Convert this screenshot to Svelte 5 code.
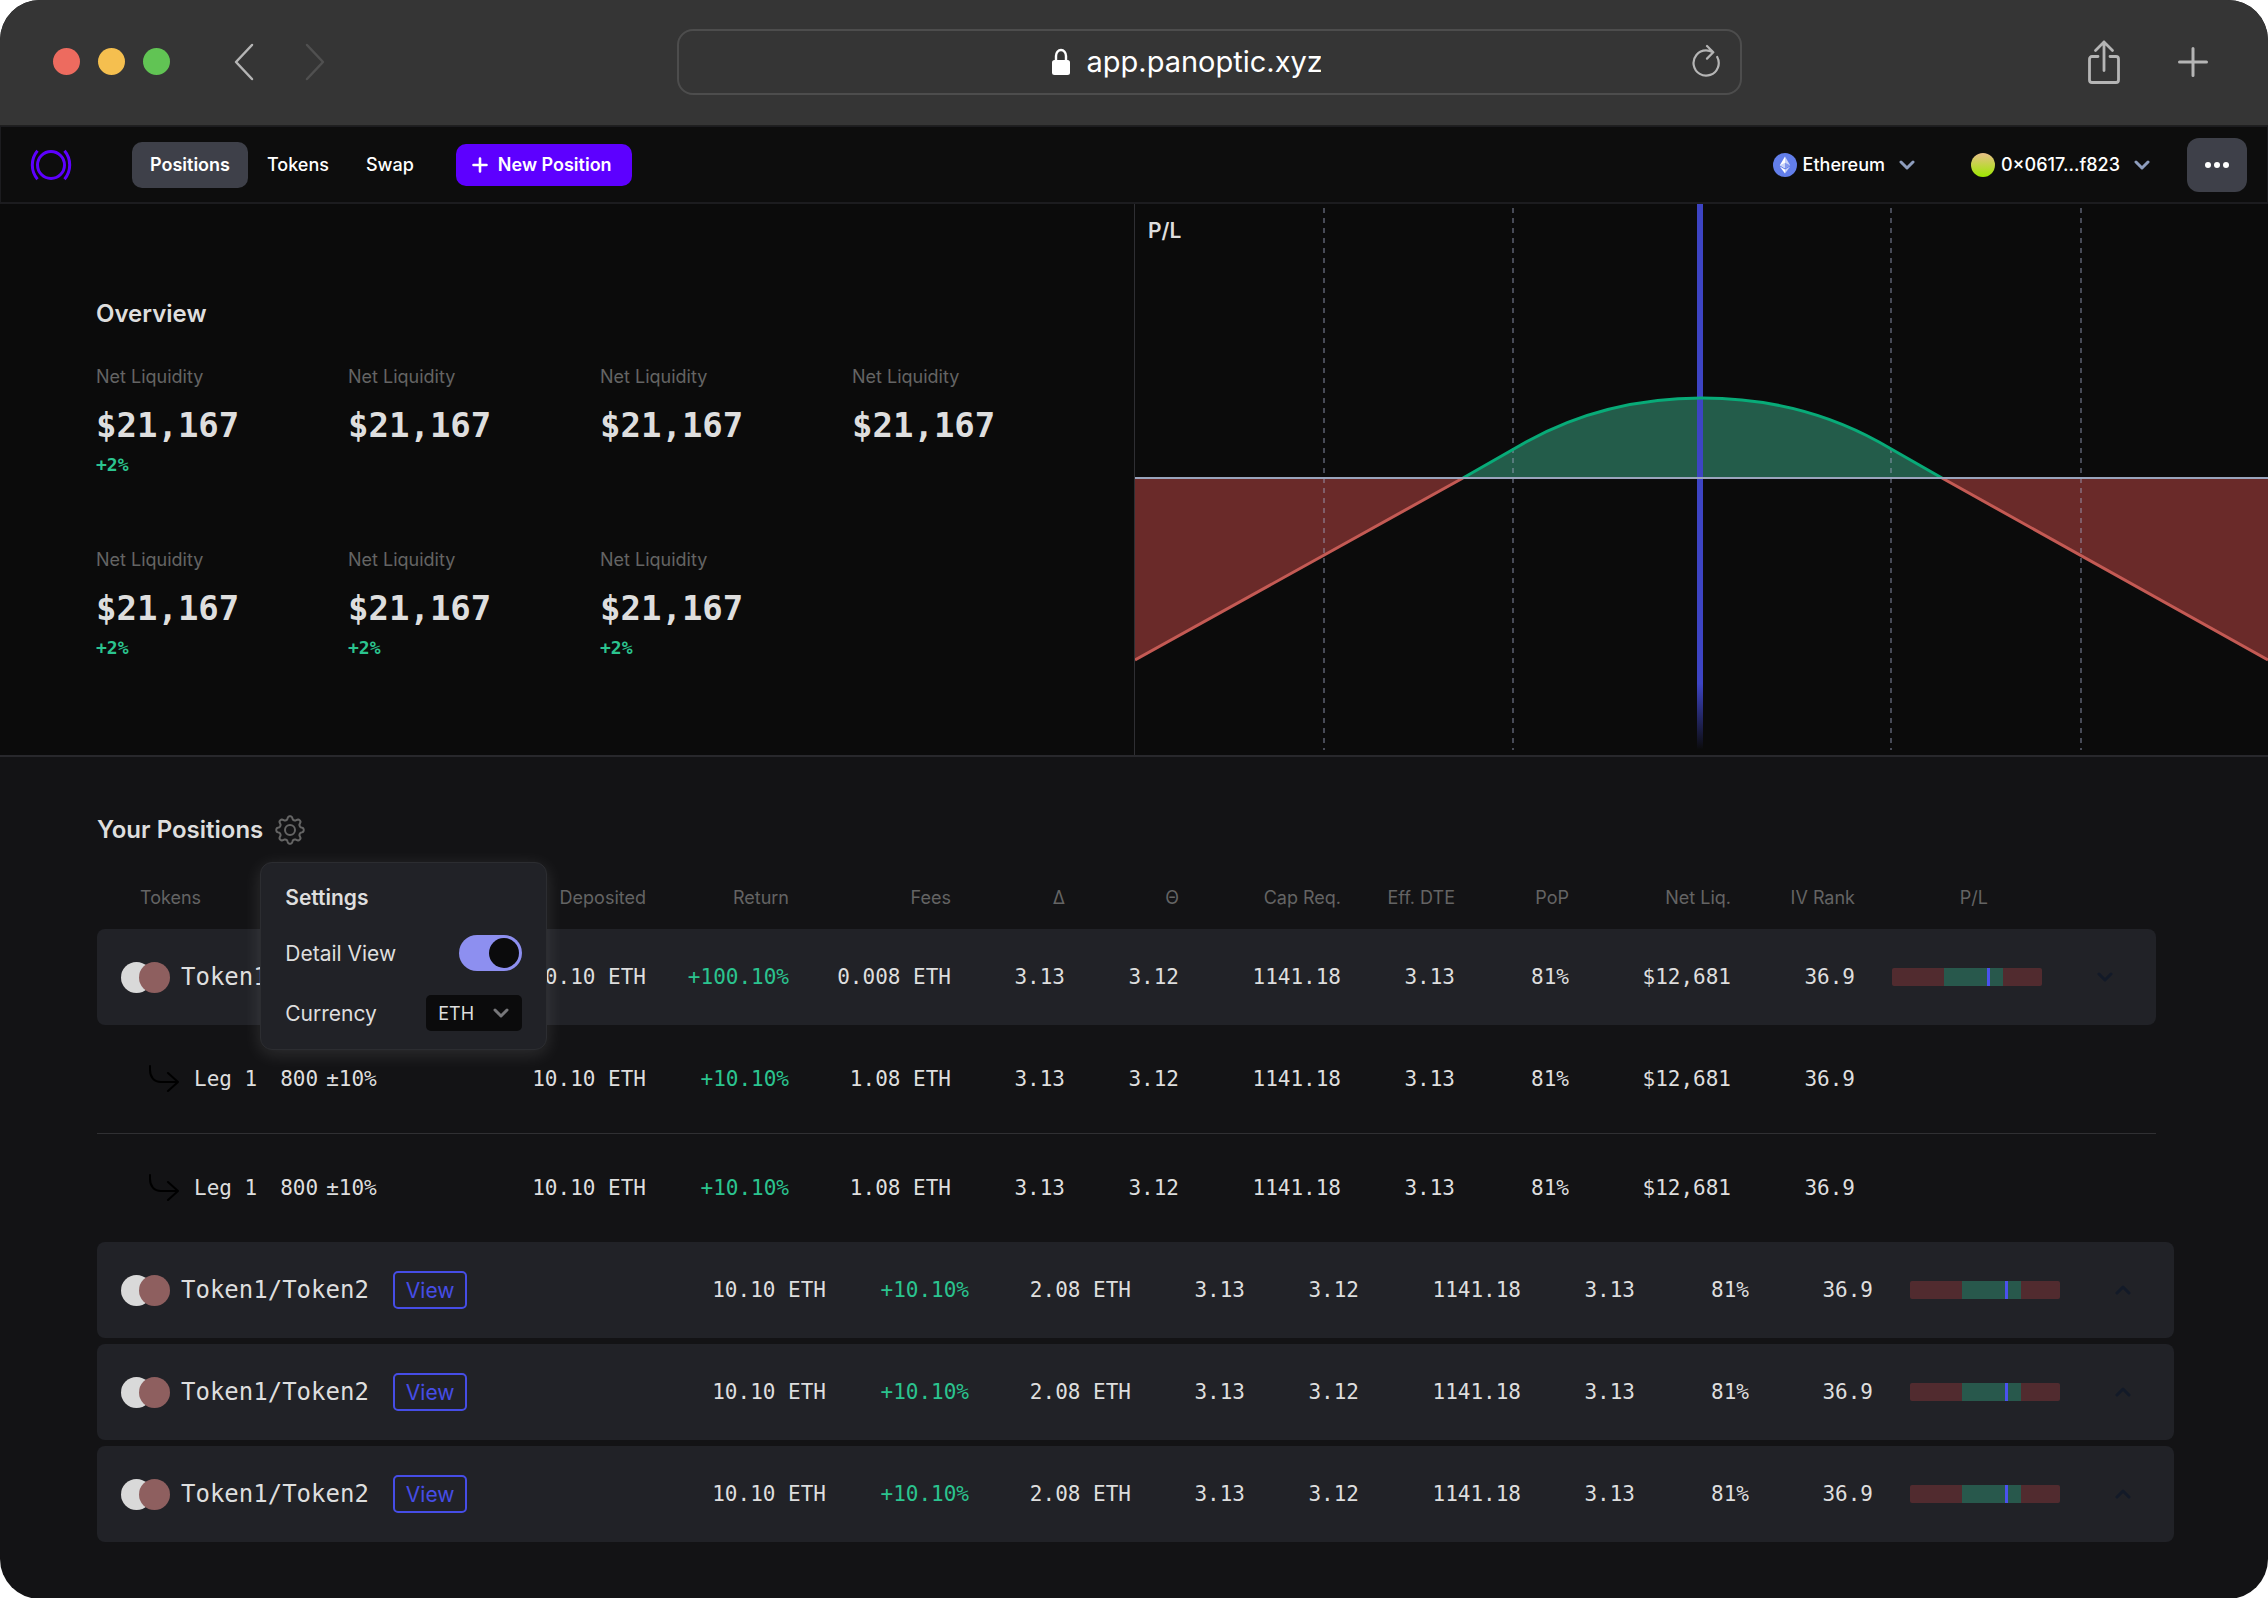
<script lang="ts">
  type Stat = { label: string; value: string; change?: string };
  type Row = { kind: 'pair' | 'leg'; cells: string[]; open?: boolean };

  const stats: Stat[] = [
    { label: 'Net Liquidity', value: '$21,167', change: '+2%' },
    { label: 'Net Liquidity', value: '$21,167' },
    { label: 'Net Liquidity', value: '$21,167' },
    { label: 'Net Liquidity', value: '$21,167' },
    { label: 'Net Liquidity', value: '$21,167', change: '+2%' },
    { label: 'Net Liquidity', value: '$21,167', change: '+2%' },
    { label: 'Net Liquidity', value: '$21,167', change: '+2%' },
  ];

  const headers = ['Deposited', 'Return', 'Fees', 'Δ', 'Θ', 'Cap Req.', 'Eff. DTE', 'PoP', 'Net Liq.', 'IV Rank'];
  const openCols = ['mid', 'mid', 'wide', 'slim', 'slim', 'wide', 'slim', 'slim', 'wide', 'rank'];
  const closedCols = openCols.filter((_, i) => i !== 8);

  const legCells = ['10.10 ETH', '+10.10%', '1.08 ETH', '3.13', '3.12', '1141.18', '3.13', '81%', '$12,681', '36.9'];
  const openRows: Row[] = [
    {
      kind: 'pair',
      open: true,
      cells: ['10.10 ETH', '+100.10%', '0.008 ETH', '3.13', '3.12', '1141.18', '3.13', '81%', '$12,681', '36.9'],
    },
    { kind: 'leg', cells: legCells },
    { kind: 'leg', cells: legCells },
  ];

  const closedCells = ['10.10 ETH', '+10.10%', '2.08 ETH', '3.13', '3.12', '1141.18', '3.13', '81%', '36.9'];
  const closedRows: Row[] = [1, 2, 3].map(() => ({ kind: 'pair', cells: closedCells }));

  // eight rounded teeth around the centre of a 30x30 box
  const gearPoints = Array.from({ length: 96 }, (_, i) => {
    const angle = (i / 96) * 2 * Math.PI;
    const radius = 12.1 + 1.7 * Math.tanh(1.8 * Math.cos(8 * angle));
    return `${(15 + radius * Math.sin(angle)).toFixed(2)},${(15 - radius * Math.cos(angle)).toFixed(2)}`;
  }).join(' ');

  let showSettings = $state(true);
  let detailView = $state(true);
  let currency = $state('ETH');
  let url = $state('app.panoptic.xyz');
</script>

{#snippet chevron(cls: string)}
  <svg class="chevron {cls}" width="16" height="10" viewBox="0 0 16 10" aria-hidden="true">
    <path d="M2 2l6 6 6-6" fill="none" stroke="currentColor" stroke-width="3" stroke-linecap="round" stroke-linejoin="round" />
  </svg>
{/snippet}

{#snippet columns(cols: string[])}
  <colgroup>
    <col />
    {#each cols as col}
      <col class={col} />
    {/each}
    <col class="bar" />
    <col class="toggle" />
  </colgroup>
{/snippet}

{#snippet positionRow(row: Row)}
  <tr class={row.kind}>
    <td>
      {#if row.kind === 'pair'}
        <div class="name">
          <span class="coins"><i></i><i></i></span>
          <span class="pairname">Token1/Token2</span>
          <button type="button" class="view">View</button>
        </div>
      {:else}
        <div class="legname">
          <svg width="30" height="28" viewBox="0 0 30 28" aria-hidden="true">
            <path d="M1 1v4c0 7 4 12 11 12h17M19 8l10 9-10 9" fill="none" stroke="#000" stroke-width="2" stroke-linecap="round" stroke-linejoin="round" />
          </svg>
          <span>Leg 1</span>
          <span class="strike"><span>800</span><span>±10%</span></span>
        </div>
      {/if}
    </td>
    {#each row.cells as cell}
      <td class:gain={cell.startsWith('+')}>{cell}</td>
    {/each}
    <td class="plcell">
      {#if row.kind === 'pair'}
        <svg class="plbar" width="150" height="18" viewBox="0 0 150 18" aria-hidden="true">
          <rect width="150" height="18" rx="2" fill="#512b2f" />
          <rect x="52" width="59" height="18" fill="#28584c" />
          <rect x="95" width="3" height="18" fill="#4a51ee" />
        </svg>
      {/if}
    </td>
    <td class="expand">
      {#if row.kind === 'pair'}
        <button type="button" aria-label={row.open ? 'Collapse' : 'Expand'}>
          {@render chevron(row.open ? '' : 'up')}
        </button>
      {/if}
    </td>
  </tr>
{/snippet}

<div class="window">
  <header class="chrome">
    <div class="lights"><i class="red"></i><i class="yellow"></i><i class="green"></i></div>
    <div class="history">
      <button type="button" aria-label="Back">
        <svg width="20" height="38" viewBox="0 0 20 38"><path d="M18 2L2 19l16 17" fill="none" stroke="#b5b5b5" stroke-width="2.5" stroke-linecap="round" stroke-linejoin="round" /></svg>
      </button>
      <button type="button" aria-label="Forward">
        <svg width="20" height="38" viewBox="0 0 20 38"><path d="M2 2l16 17L2 36" fill="none" stroke="#505050" stroke-width="2.5" stroke-linecap="round" stroke-linejoin="round" /></svg>
      </button>
    </div>
    <div class="address">
      <div class="location">
        <svg width="20" height="28" viewBox="0 0 20 28" aria-hidden="true">
          <rect x="1" y="12" width="18" height="15" rx="2.5" fill="#fff" />
          <path d="M5 13V8a5 6 0 0 1 10 0v5" fill="none" stroke="#fff" stroke-width="2.4" />
        </svg>
        <input type="text" aria-label="Address" bind:value={url} />
      </div>
      <button type="button" aria-label="Reload">
        <svg width="28" height="36" viewBox="0 0 28 36">
          <path d="M25.200 13A12.600 12.600 0 1 1 14 6.400c2.800 0 5 .8 7 1.900M15 2l6.300 6.300L15 14.600" fill="none" stroke="#b5b5b5" stroke-width="2.200" stroke-linecap="round" stroke-linejoin="round" />
        </svg>
      </button>
    </div>
    <div class="actions">
      <button type="button" aria-label="Share">
        <svg width="32" height="44" viewBox="0 0 32 44">
          <path d="M10 16.500H4a2.500 2.500 0 0 0-2.500 2.500v21A2.500 2.500 0 0 0 4 42.500h24a2.500 2.500 0 0 0 2.500-2.500V19a2.500 2.500 0 0 0-2.500-2.500h-6M16 30.500V2M7.500 10.500L16 2l8.500 8.500" fill="none" stroke="#b5b5b5" stroke-width="2.800" stroke-linecap="round" stroke-linejoin="round" />
        </svg>
      </button>
      <button type="button" aria-label="New tab">
        <svg width="30" height="30" viewBox="0 0 30 30"><path d="M15 1.500v27M1.500 15h27" stroke="#b5b5b5" stroke-width="3" stroke-linecap="round" /></svg>
      </button>
    </div>
  </header>

  <nav>
    <a class="logo" href="#home" aria-label="Panoptic">
      <svg width="42" height="32" viewBox="0 0 42 32" fill="none" stroke="#5d00ff" stroke-width="3">
        <circle cx="21" cy="16" r="13.500" />
        <path d="M7.500 1.800a22 22 0 0 0 0 28.400M34.500 1.800a22 22 0 0 1 0 28.400" />
      </svg>
    </a>
    <a class="tab active" href="#positions">Positions</a>
    <a class="tab" href="#tokens">Tokens</a>
    <a class="tab" href="#swap">Swap</a>
    <button type="button" class="new">
      <svg width="16" height="16" viewBox="0 0 16 16" aria-hidden="true"><path d="M8 1.500v13M1.500 8h13" stroke="#fff" stroke-width="2.600" stroke-linecap="round" /></svg>
      New Position
    </button>
    <div class="account">
      <button type="button" class="picker">
        <svg width="24" height="24" viewBox="0 0 24 24" aria-hidden="true">
          <circle cx="12" cy="12" r="12" fill="#627eea" />
          <path d="M12 3.500L6.800 12.200 12 15.300z" fill="#fff" />
          <path d="M12 3.500l5.200 8.700L12 15.300z" fill="#c9d3f8" />
          <path d="M12 9.800l-5.200 2.400L12 15.300z" fill="#c9d3f8" />
          <path d="M12 9.800l5.200 2.400L12 15.300z" fill="#8197ee" />
          <path d="M6.800 13.400L12 20.500v-4z" fill="#fff" />
          <path d="M17.200 13.400L12 20.500v-4z" fill="#c9d3f8" />
        </svg>
        <span>Ethereum</span>
        {@render chevron('')}
      </button>
      <button type="button" class="picker">
        <i class="avatar"></i>
        <span>0×0617...f823</span>
        {@render chevron('')}
      </button>
      <button type="button" class="more" aria-label="More">
        <svg width="24" height="6" viewBox="0 0 24 6" fill="#fff"><circle cx="3" cy="3" r="3" /><circle cx="12" cy="3" r="3" /><circle cx="21" cy="3" r="3" /></svg>
      </button>
    </div>
  </nav>

  <section class="top">
    <div class="overview">
      <h2>Overview</h2>
      <div class="stats">
        {#each stats as stat}
          <div class="stat">
            <span class="label">{stat.label}</span>
            <span class="value">{stat.value}</span>
            {#if stat.change}
              <span class="change">{stat.change}</span>
            {/if}
          </div>
        {/each}
      </div>
    </div>
    <div class="chart">
      <h3>P/L</h3>
      <svg viewBox="0 0 1133 551" preserveAspectRatio="none" role="img" aria-label="Profit and loss curve">
        <defs>
          <linearGradient id="price" x1="0" y1="0" x2="0" y2="551" gradientUnits="userSpaceOnUse">
            <stop offset="0.87" stop-color="#3d44c4" />
            <stop offset="0.99" stop-color="#3d44c4" stop-opacity="0" />
          </linearGradient>
        </defs>
        <path d="M0 274H328L0 456z" fill="#6a2a29" />
        <path d="M1133 274H807l326 182z" fill="#6a2a29" />
        <path d="M328 274L391 238C447 207 505 194 567 194S688 207 744 238L807 274z" fill="#235c4a" />
        <g stroke="#a3a9c8" stroke-opacity="0.4" stroke-width="2" stroke-dasharray="5 5">
          <path d="M189 4v542M378 4v542M756 4v542M946 4v542" />
        </g>
        <path d="M0 456L328 274M807 274l326 182" stroke="#c45a54" stroke-width="3" />
        <rect x="562" width="6" height="551" fill="url(#price)" />
        <path d="M328 274L391 238C447 207 505 194 567 194S688 207 744 238L807 274" fill="none" stroke="#08ab78" stroke-width="3" />
        <path d="M0 274h1133" stroke="#9aa5bd" stroke-width="2" />
      </svg>
    </div>
  </section>

  <section class="positions">
    <div class="title">
      <h2>Your Positions</h2>
      <div class="settings">
        <button type="button" class="gear" aria-label="Settings" onclick={() => (showSettings = !showSettings)}>
          <svg width="30" height="30" viewBox="0 0 30 30" fill="none" stroke="#646464" stroke-width="2" stroke-linejoin="round">
            <polygon points={gearPoints} />
            <circle cx="15" cy="15" r="5" />
          </svg>
        </button>
        {#if showSettings}
          <div class="popover">
            <h3>Settings</h3>
            <div class="option">
              <label for="detail">Detail View</label>
              <input id="detail" type="checkbox" bind:checked={detailView} />
            </div>
            <div class="option">
              <label for="currency">Currency</label>
              <div class="select">
                <select id="currency" bind:value={currency}>
                  <option>ETH</option>
                </select>
                {@render chevron('')}
              </div>
            </div>
          </div>
        {/if}
      </div>
    </div>

    <div class="group">
      <table>
        {@render columns(openCols)}
        <thead>
          <tr>
            <th>Tokens</th>
            {#each headers as header}
              <th>{header}</th>
            {/each}
            <th>P/L</th>
            <th></th>
          </tr>
        </thead>
        <tbody>
          {#each openRows as row}
            {@render positionRow(row)}
          {/each}
        </tbody>
      </table>
    </div>

    <table class="closed">
      {@render columns(closedCols)}
      <tbody>
        {#each closedRows as row}
          {@render positionRow(row)}
        {/each}
      </tbody>
    </table>
  </section>
</div>

<style>
  :global(body) {
    background: #fff;
  }
  .window {
    --fg: #dedede;
    --muted: #646464;
    --card: #212227;
    --green: #2bc48f;
    --blue: #464de6;
    --mono: "DejaVu Sans Mono", monospace;
    font-family: Inter, sans-serif;
    font-size: 18px;
    color: var(--fg);
    background: #131315;
    border-radius: 40px;
    overflow: hidden;
  }
  .window :is(h2, h3) {
    margin: 0;
    font-weight: 600;
  }
  button,
  input,
  select {
    font: inherit;
    color: inherit;
    margin: 0;
    padding: 0;
    border: none;
    background: none;
  }
  svg {
    display: block;
    flex: none;
  }

  .chrome {
    display: flex;
    align-items: center;
    height: 126px;
    padding: 0 60px 2px 53px;
    background: #353535;
    border-bottom: 1px solid #1f1f1f;
    box-sizing: border-box;
  }
  .lights {
    display: flex;
    gap: 18px;

    & i {
      width: 27px;
      height: 27px;
      border-radius: 50%;
    }
  }
  .red { background: #ed6b5f; }
  .yellow { background: #f5bf4f; }
  .green { background: #61c454; }
  .history {
    display: flex;
    gap: 51px;
    margin-left: 64px;
  }
  .address {
    display: flex;
    align-items: center;
    flex: 1;
    height: 66px;
    margin: 0 346px 0 352px;
    padding-right: 20px;
    border: 2px solid #4d4d4d;
    border-radius: 16px;
    box-sizing: border-box;
  }
  .location {
    display: flex;
    align-items: center;
    justify-content: center;
    gap: 16px;
    flex: 1;

    & input {
      width: 234px;
      font-size: 29px;
      line-height: 36px;
      color: #fff;
    }
  }
  .actions {
    display: flex;
    align-items: center;
    gap: 58px;
  }

  nav {
    display: flex;
    align-items: center;
    height: 78px;
    padding: 0 20px 0 29px;
    background: #0d0d0d;
    border: solid #1c1c1f;
    border-width: 1px 1px 2px;
    box-sizing: border-box;
    color: #fff;
  }
  .logo {
    margin-right: 60px;
  }
  .tab {
    margin-right: 1px;
    padding: 0 18px;
    line-height: 46px;
    border-radius: 10px;
    color: #fff;
    font-weight: 500;
    text-decoration: none;

    &.active {
      background: #3e4049;
      font-weight: 600;
    }
  }
  .new {
    display: flex;
    align-items: center;
    gap: 10px;
    height: 42px;
    margin-left: 23px;
    padding: 0 20px 0 16px;
    border-radius: 10px;
    background: #5d00ff;
    font-weight: 600;
  }
  .account {
    display: flex;
    align-items: center;
    margin-left: auto;
  }
  .picker {
    display: flex;
    align-items: center;
    gap: 6px;
    margin-right: 56px;
    font-weight: 500;

    & .chevron {
      margin-left: 8px;
      color: #8e9dbd;
    }
    & + .more {
      margin-left: -19px;
    }
  }
  .avatar {
    width: 24px;
    height: 24px;
    border-radius: 50%;
    background: linear-gradient(#e8c088, #9de800);
  }
  .more {
    display: flex;
    align-items: center;
    justify-content: center;
    width: 60px;
    height: 54px;
    border-radius: 12px;
    background: #3e4049;
  }

  .top {
    display: grid;
    grid-template-columns: 1fr 1fr;
    background: #0b0b0b;
    border-bottom: 2px solid #28282c;
  }
  .overview {
    padding: 95px 30px 89px 96px;
  }
  h2 {
    font-size: 24px;
    line-height: 30px;
  }
  .stats {
    display: grid;
    grid-template-columns: repeat(4, 1fr);
    row-gap: 72px;
    margin-top: 36px;
  }
  .stat {
    display: flex;
    flex-direction: column;
    height: 111px;
  }
  .label {
    line-height: 24px;
    color: var(--muted);
  }
  .value {
    margin-top: 12px;
    font: bold 34px/48px var(--mono);
  }
  .change {
    margin-top: 4px;
    font: bold 18px/24px var(--mono);
    color: var(--green);
  }
  .chart {
    position: relative;
    min-height: 551px;
    border-left: 1px solid #2f2f33;

    & h3 {
      position: absolute;
      left: 13px;
      top: 14px;
      font-size: 21px;
      line-height: 26px;
    }
    & svg {
      position: absolute;
      width: 100%;
      height: 100%;
    }
  }

  .positions {
    padding: 58px 94px 57px 97px;
  }
  .title {
    display: flex;
    gap: 12px;
    margin-bottom: 20px;
  }
  .settings {
    position: relative;
  }
  .gear {
    display: block;
  }
  .popover {
    position: absolute;
    z-index: 1;
    top: 47px;
    left: -15px;
    display: flex;
    flex-direction: column;
    gap: 24px;
    width: 287px;
    padding: 22px 24px 18px;
    border: 1px solid #2c2d31;
    border-radius: 12px;
    background: var(--card);
    box-shadow: 0 4px 18px rgba(255, 255, 255, .12);
    box-sizing: border-box;
    font-size: 21px;

    & h3 {
      font-size: 21px;
      line-height: 26px;
    }
  }
  .option {
    display: flex;
    align-items: center;
    justify-content: space-between;
    height: 36px;
  }
  input[type='checkbox'] {
    appearance: none;
    display: flex;
    justify-content: flex-start;
    width: 63px;
    height: 36px;
    padding: 3px;
    border-radius: 18px;
    background: #55565e;
    box-sizing: border-box;

    &::before {
      content: '';
      width: 30px;
      height: 30px;
      border-radius: 50%;
      background: #0b0b0c;
    }
    &:checked {
      justify-content: flex-end;
      background: #8d8ff0;
    }
  }
  .select {
    display: grid;
    align-items: center;
    width: 96px;
    height: 36px;
    border-radius: 5px;
    background: #0b0b0c;

    & select,
    & .chevron {
      grid-area: 1 / 1;
    }
    & select {
      appearance: none;
      height: 36px;
      padding-left: 12px;
      font-size: 18px;
    }
    & .chevron {
      justify-self: end;
      margin-right: 13px;
      color: #77777a;
      pointer-events: none;
    }
  }

  .group {
    padding-right: 18px;
  }
  table {
    width: 100%;
    table-layout: fixed;
    border-collapse: separate;
    border-spacing: 0;
  }
  .closed {
    margin-top: -6px;
    margin-bottom: -6px;
    border-spacing: 0 6px;
  }
  .mid { width: 143px; }
  .wide { width: 162px; }
  .slim { width: 114px; }
  .rank { width: 124px; }
  .bar { width: 187px; }
  .toggle { width: 114px; }
  th {
    height: 64px;
    padding: 0;
    font-weight: 400;
    text-align: right;
    color: var(--muted);

    &:first-child {
      padding-left: 43px;
      text-align: left;
    }
    &:nth-last-child(2) {
      padding-right: 54px;
    }
  }
  td {
    height: 96px;
    padding: 0;
    font: 21px var(--mono);
    text-align: right;
    white-space: nowrap;
  }
  .gain {
    color: var(--green);
  }
  .pair td {
    background: var(--card);

    &:first-child { border-radius: 8px 0 0 8px; }
    &:last-child { border-radius: 0 8px 8px 0; }
  }
  .leg td {
    height: 108px;
  }
  .leg:not(:last-child) td {
    border-bottom: 1px solid #303033;
  }
  .name,
  .legname {
    display: flex;
    align-items: center;
  }
  .name {
    padding-left: 24px;
  }
  .coins {
    display: flex;

    & i {
      width: 31px;
      height: 31px;
      border-radius: 50%;
      background: #d9d9d9;
    }
    & i + i {
      margin-left: -13px;
      background: #8e5f5f;
    }
  }
  .pairname {
    margin: 0 24px 0 11px;
    font-size: 24px;
  }
  .view {
    height: 38px;
    padding: 0 11px;
    border: 2px solid var(--blue);
    border-radius: 5px;
    color: var(--blue);
    font: 21px Inter, sans-serif;
  }
  .legname {
    padding-left: 52px;
    gap: 15px;
  }
  .strike {
    display: flex;
    gap: 8px;
    margin-left: 8px;
  }
  .plcell {
    padding-left: 37px;
  }
  .expand button {
    display: block;
    margin-left: 55px;
    color: #131a28;
  }
  .up {
    transform: rotate(180deg);
  }
</style>
